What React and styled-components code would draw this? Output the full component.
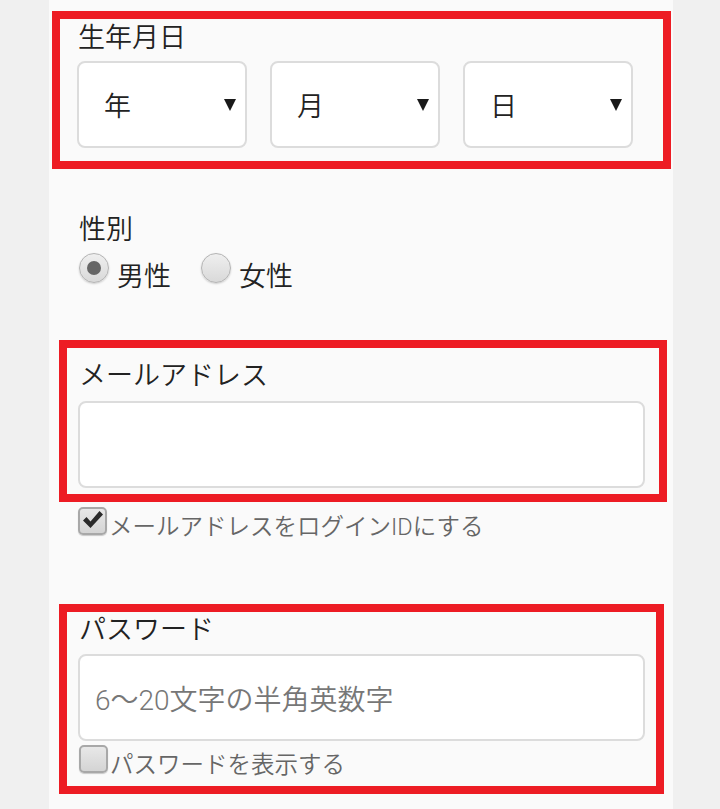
import styled, { createGlobalStyle } from 'styled-components'

const GlobalStyle = createGlobalStyle`
  body {
    margin: 0;
    background: #f0f0f0;
    font-family: Roboto, "Noto Sans CJK JP", sans-serif;
    font-weight: 350;
    color: #222;
  }
`

const Panel = styled.div`
  width: 624px;
  margin-left: 49px;
  min-height: 100vh;
  background: #fafafa;
  padding-top: 11px;
  box-sizing: border-box;
  display: flow-root;
`
const Highlight = styled.div`
  border: 8px solid #ed1c24;
  margin: ${props => props.margin};
  padding: ${props => props.pad};
`
const Label = styled.div`
  font-size: 27px;
  line-height: 1.2;
  padding-left: ${props => props.indent || 0}px;
`
const SelectRow = styled.div`
  display: grid;
  grid-template-columns: repeat(3, 170px);
  column-gap: 23px;
  margin-top: 7px;
`
const Select = styled.div`
  height: 87px;
  box-sizing: border-box;
  border: 2px solid #dcdcdc;
  border-radius: 8px;
  background: #fff;
  display: flex;
  align-items: center;
  justify-content: space-between;
  padding: 0 9px 0 25px;
  font-size: 27px;
`
const Arrow = styled.span`
  width: 0;
  height: 0;
  border-left: 6.5px solid transparent;
  border-right: 6.5px solid transparent;
  border-top: 12px solid #1a1a1a;
`
const Section = styled.div`
  padding: ${props => props.pad};
`
const RadioRow = styled.div`
  font-size: 27px;
  line-height: 1.2;
  margin-top: 9px;
`
const RadioItem = styled.label`
  margin-right: 30px;
`
const Radio = styled.span`
  display: inline-block;
  position: relative;
  top: -3px;
  width: 30px;
  height: 30px;
  box-sizing: border-box;
  border-radius: 50%;
  border: 1px solid #b4b4b4;
  background: linear-gradient(#efefef, #d9d9d9);
  box-shadow: 0 1px 2px rgba(0, 0, 0, 0.18);
  margin-right: 8px;
  &::after {
    content: '';
    display: ${props => (props.checked ? 'block' : 'none')};
    position: absolute;
    left: 7px;
    top: 7px;
    width: 14px;
    height: 14px;
    border-radius: 50%;
    background: #666;
  }
`
const Input = styled.div`
  height: 87px;
  box-sizing: border-box;
  border: 2px solid #dcdcdc;
  border-radius: 8px;
  background: #fff;
  margin-top: 8px;
  display: flex;
  align-items: center;
  padding-left: 15px;
  font-size: 28px;
  color: #777;
`
const CheckRow = styled.div`
  font-size: 23.5px;
  line-height: 1.2;
  color: #666;
  margin: ${props => props.margin || 0};
  padding-left: ${props => props.indent || 0}px;
`
const Box = styled.span`
  display: inline-block;
  position: relative;
  width: 29px;
  height: 28px;
  box-sizing: border-box;
  border: 2px solid #a8a8a8;
  border-radius: 5px;
  background: linear-gradient(#e8e8e8, #d4d4d4);
  box-shadow: 0 1px 1px rgba(0, 0, 0, 0.2);
  margin-right: 2px;
  svg {
    position: absolute;
    left: 2px;
    top: 1px;
  }
`

const Check = () => (
  <svg width='22' height='19' viewBox='0 0 22 19'>
    <path d='M1 10.5 L4.5 7 L8.5 11.5 L17.5 1 L21 4.5 L8.5 18 Z' fill='#2a2a2a' />
  </svg>
)

export default function App() {
  return (
    <>
      <GlobalStyle />
      <Panel>
        <Highlight margin='0 2px 0 3px' pad='3px 30px 13px 17px'>
          <Label indent={1}>生年月日</Label>
          <SelectRow>
            <Select>年<Arrow /></Select>
            <Select>月<Arrow /></Select>
            <Select>日<Arrow /></Select>
          </SelectRow>
        </Highlight>

        <Section pad='45px 0 0 30px'>
          <Label>性別</Label>
          <RadioRow>
            <RadioItem><Radio checked />男性</RadioItem>
            <RadioItem><Radio />女性</RadioItem>
          </RadioRow>
        </Section>

        <Highlight margin='47px 6px 0 10px' pad='12px 14px 6px 11px'>
          <Label indent={1}>メールアドレス</Label>
          <Input />
        </Highlight>
        <CheckRow margin='5px 0 0' indent={29}>
          <Box><Check /></Box>メールアドレスをログインIDにする
        </CheckRow>

        <Highlight margin='63px 9px 0 10px' pad='2px 11px 7px 11px'>
          <Label indent={1}>パスワード</Label>
          <Input>6〜20文字の半角英数字</Input>
          <CheckRow margin='4px 0 0' indent={1}>
            <Box />パスワードを表示する
          </CheckRow>
        </Highlight>
      </Panel>
    </>
  )
}
